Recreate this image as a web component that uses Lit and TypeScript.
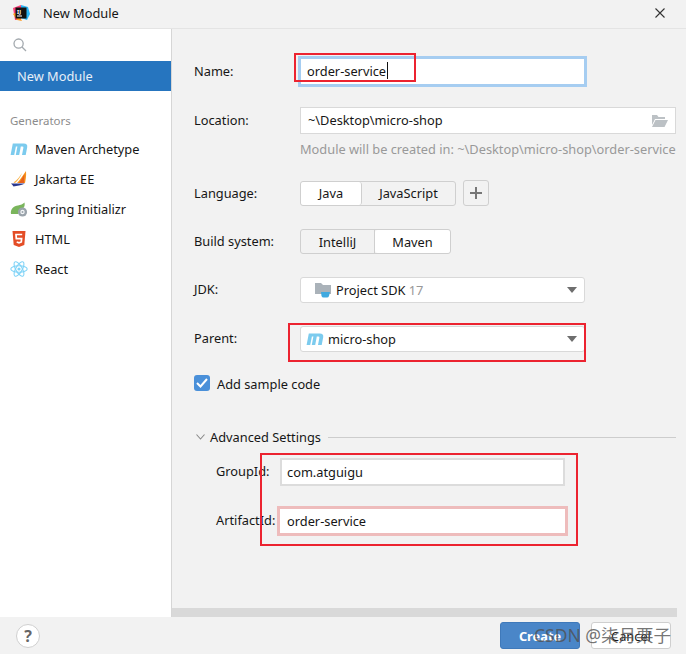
import { LitElement, html, css } from 'lit';
import { customElement } from 'lit/decorators.js';

const mavenIcon = html`<svg class="ic" width="18" height="14" viewBox="0 0 18 14">
  <path fill="#7ccbee" d="M0.6 13 L2.8 1.6 L13.8 1.6 Q17.8 1.6 17.2 5.2 L15.7 13 L12 13 L13.4 5.8 Q13.7 4.4 12.3 4.4 L10.8 4.4 L9.2 13 L5.8 13 L7.4 4.4 L5.9 4.4 L4.2 13Z"/>
</svg>`;

const jakartaIcon = html`<svg class="ic" width="18" height="18" viewBox="0 0 18 18">
  <path fill="#f7941d" d="M16 1 C16.5 6 15.5 10 15 13 L7 13 C10 10 13 5 16 1Z"/>
  <path fill="#fbb040" d="M12 3 C10.5 7 8 10.5 5 13 L3.5 12.5 C7 10 10 6.5 12 3Z"/>
  <path fill="#e8601c" d="M9 13 C11 10 13 7 14.5 4 L14 13Z"/>
  <path fill="#2b3990" d="M1 13.5 L15 13.5 C11 15.5 7 16 3.5 16.5 C3 15.5 2 14.5 1 13.5Z"/>
</svg>`;

const springIcon = html`<svg class="ic" width="18" height="18" viewBox="0 0 18 18">
  <path fill="#7ab55c" d="M1 14 C0 9 4 6 8 5.5 C10.5 5 13 4 14.5 2.5 C15 5 14.5 7 13 8.5 L8 14Z"/>
  <circle cx="12.5" cy="12" r="4.6" fill="#9aa3ab"/>
  <circle cx="12.5" cy="12" r="2.2" fill="#f4f6f7"/>
  <circle cx="12.5" cy="12" r="1" fill="#9aa3ab"/>
</svg>`;

const htmlIcon = html`<svg class="ic" width="18" height="18" viewBox="0 0 18 18">
  <path fill="#e44d26" d="M2.5 1 L15.5 1 L14.3 15 L9 17 L3.7 15Z"/>
  <path fill="none" stroke="#fff" stroke-width="1.7" d="M12.2 4.5 L6 4.5 L6.3 8.6 L11.6 8.6 L11.3 12 L9 12.8 L6.7 12"/>
</svg>`;

const reactIcon = html`<svg class="ic" width="18" height="18" viewBox="0 0 18 18">
  <g fill="none" stroke="#7fd3f7" stroke-width="1.1">
    <ellipse cx="9" cy="9" rx="8.2" ry="3.2"/>
    <ellipse cx="9" cy="9" rx="8.2" ry="3.2" transform="rotate(60 9 9)"/>
    <ellipse cx="9" cy="9" rx="8.2" ry="3.2" transform="rotate(120 9 9)"/>
  </g>
  <circle cx="9" cy="9" r="1.6" fill="#7fd3f7"/>
</svg>`;

const caret = html`<svg class="caret" width="10" height="6" viewBox="0 0 10 6"><path fill="#6e6e6e" d="M0 0 L10 0 L5 6Z"/></svg>`;

@customElement('app-root')
export class AppRoot extends LitElement {
  static styles = css`
    :host {
      display: block;
      width: 686px;
      height: 654px;
      overflow: hidden;
      position: relative;
      background: #f2f2f2;
      color: #161616;
      font-family: "Noto Sans", "Noto Sans CJK SC", sans-serif;
      font-size: 12.8px;
    }
    .titlebar {
      height: 28px;
      box-sizing: content-box;
      display: flex;
      align-items: center;
      padding: 0 21px 0 12px;
      border-bottom: 1px solid #e4e4e4;
    }
    .titlebar > * { margin-bottom: 2px; }
    .logo { margin-right: 13px; }
    .title { flex: 1; }
    .body { display: flex; height: 588px; }
    .side {
      width: 171px;
      background: #fff;
      border-right: 1px solid #d6d6d6;
      flex: none;
    }
    .search { height: 32px; display: flex; align-items: center; padding-left: 13px; }
    .selected {
      height: 30px;
      background: #2675bf;
      color: #e6eff8;
      display: flex;
      align-items: center;
      padding-left: 17px;
    }
    .gen-title { color: #8c8c8c; font-size: 11.5px; margin: 21px 0 4px 10px; line-height: 18px; }
    .gen {
      height: 30px;
      display: flex;
      align-items: center;
      gap: 7px;
      padding-left: 10px;
    }
    .ic { flex: none; }
    .main { flex: 1; display: flex; flex-direction: column; min-width: 0; }
    .form { flex: 1; padding: 30px 10px 0 22px; }
    .row { display: flex; align-items: center; }
    .lbl { width: 106px; flex: none; padding-bottom: 2px; box-sizing: border-box; }
    .field {
      background: #fff;
      border: 1px solid #d9d9d9;
      box-sizing: border-box;
      display: flex;
      align-items: center;
      padding: 0 7px;
    }
    .name-field {
      width: 283px;
      height: 25px;
      margin-left: 1px;
      border: none;
      padding: 0 6px 2px;
      box-shadow: 0 0 0 3px #a6cdf1;
    }
    .cursor { width: 1px; height: 17px; background: #111; margin-left: 1px; }
    .loc-row { margin-top: 23px; }
    .loc-field { width: 376px; height: 27px; justify-content: space-between; padding: 0 7px 2px; }
    .loc-field svg { margin-top: 2px; }
    .hint { color: #999; margin: 6px 0 0 106px; line-height: 19px; white-space: nowrap; }
    .lang-row { margin-top: 21px; }
    .lang-row .lbl { padding-bottom: 0; }
    .seg {
      display: flex;
      height: 25px;
      box-sizing: border-box;
      border: 1px solid #cfcfcf;
      border-radius: 3px;
      background: #f2f2f2;
    }
    .seg span { display: flex; align-items: center; justify-content: center; }
    .seg .on { background: #fff; border-radius: 3px; }
    .lang-seg { width: 156px; }
    .lang-seg .java { width: 60px; border-right: 1px solid #cfcfcf; }
    .lang-seg .js { flex: 1; }
    .plus {
      width: 26px;
      height: 26px;
      box-sizing: border-box;
      margin-left: 7px;
      border: 1px solid #cfcfcf;
      border-radius: 3px;
      display: flex;
      align-items: center;
      justify-content: center;
    }
    .build-row { margin-top: 23px; }
    .build-seg { width: 151px; }
    .build-seg .ij { width: 73px; border-right: 1px solid #cfcfcf; }
    .build-seg .mvn { flex: 1; }
    .combo {
      width: 285px;
      height: 26px;
      box-sizing: border-box;
      background: #fff;
      border: 1px solid #d9d9d9;
      border-radius: 3px;
      display: flex;
      align-items: center;
      padding: 0 7px 0 14px;
      gap: 4px;
    }
    .jdk-row { margin-top: 23px; }
    .parent-row { margin-top: 23px; }
    .parent-row .combo { padding-left: 5px; }
    .muted { color: #999; }
    .caret { margin-left: auto; }
    .check { margin-top: 23px; display: flex; align-items: center; gap: 7px; height: 16px; }
    .check .txt { padding-top: 2px; }
    .box {
      width: 16px;
      height: 16px;
      border-radius: 3px;
      background: #4a90d9;
      display: flex;
      align-items: center;
      justify-content: center;
    }
    .adv { margin-top: 37px; display: flex; align-items: center; gap: 5px; padding-left: 2px; height: 18px; }
    .adv .rule { flex: 1; height: 1px; background: #cdcdcd; margin-left: 2px; }
    .adv-rows { padding-left: 22px; }
    .adv .label { white-space: nowrap; }
    .adv-rows .lbl { width: 64px; }
    .group-row { margin-top: 12px; }
    .group-field { width: 285px; height: 28px; border-width: 2px; border-color: #dcdcdc; padding: 0 5px; }
    .artifact-row { margin-top: 23px; }
    .artifact-field {
      width: 285px;
      height: 24px;
      border: none;
      box-shadow: 0 0 0 3px #eebcbc;
      padding-left: 7px;
    }
    .hscroll { height: 9px; background: #d9d9d9; margin-right: 9px; }
    .footer {
      height: 37px;
      display: flex;
      align-items: center;
      padding: 0 15px 0 16px;
    }
    .help {
      width: 24px;
      height: 24px;
      border-radius: 50%;
      background: #fff;
      border: 1px solid #d0d0d0;
      box-sizing: border-box;
      color: #666;
      font-weight: 700;
      font-size: 16px;
      display: flex;
      align-items: center;
      justify-content: center;
    }
    .btn {
      width: 80px;
      height: 27px;
      box-sizing: border-box;
      border-radius: 3px;
      display: flex;
      align-items: center;
      justify-content: center;
    }
    .create { margin-left: auto; background: #4a86c8; border: 1px solid #3f79ba; color: #fff; font-weight: 700; }
    .cancel { margin-left: 11px; background: #fff; border: 1px solid #cfcfcf; }
    .mark { position: absolute; border: 2px solid #ec2330; box-sizing: border-box; pointer-events: none; }
    .mark-name { left: 294px; top: 53px; width: 122px; height: 29px; }
    .mark-parent { left: 288px; top: 323px; width: 298px; height: 39px; }
    .mark-group { left: 260px; top: 453px; width: 318px; height: 93px; }
    .watermark {
      position: absolute;
      left: 534px;
      top: 623px;
      font-size: 17.5px;
      line-height: 24px;
      color: rgba(80, 80, 80, 0.8);
      white-space: nowrap;
    }
  `;

  render() {
    return html`
      <div class="titlebar">
        <svg class="logo" width="18" height="18" viewBox="0 0 18 18">
          <path fill="#fc3f77" d="M1 4 L9 1 L9 16 L3 16Z"/>
          <path fill="#ff9a1f" d="M1 10 L5 16 L10 17 L5 8Z"/>
          <path fill="#29b6f6" d="M9 1 L16 3 L18 10 L15 16 L9 14Z"/>
          <rect x="3.5" y="3.5" width="11" height="11" fill="#111"/>
          <text x="5" y="9.5" font-size="5.5" font-weight="700" fill="#fff">IJ</text>
          <rect x="5" y="11.5" width="5" height="1" fill="#fff"/>
        </svg>
        <span class="title">New Module</span>
        <svg width="10" height="10" viewBox="0 0 10 10"><path stroke="#333" stroke-width="1.1" d="M0.5 0.5 L9.5 9.5 M9.5 0.5 L0.5 9.5"/></svg>
      </div>
      <div class="body">
        <div class="side">
          <div class="search">
            <svg width="14" height="14" viewBox="0 0 14 14" fill="none" stroke="#a3a9ae" stroke-width="1.3"><circle cx="5.6" cy="5.6" r="4.6"/><path d="M9 9 L13 13"/></svg>
          </div>
          <div class="selected">New Module</div>
          <div class="gen-title">Generators</div>
          <div class="gen">${mavenIcon}Maven Archetype</div>
          <div class="gen">${jakartaIcon}Jakarta EE</div>
          <div class="gen">${springIcon}Spring Initializr</div>
          <div class="gen">${htmlIcon}HTML</div>
          <div class="gen">${reactIcon}React</div>
        </div>
        <div class="main">
          <div class="form">
            <div class="row">
              <span class="lbl">Name:</span>
              <div class="field name-field">order-service<span class="cursor"></span></div>
            </div>
            <div class="row loc-row">
              <span class="lbl">Location:</span>
              <div class="field loc-field">~\\Desktop\\micro-shop
                <svg width="17" height="13" viewBox="0 0 17 13"><path fill="#bcc1c5" d="M1 1 L6 1 L7.5 3 L14 3 L14 5 L4 5 L1 11Z M4.5 6 L17 6 L13.5 13 L1 13Z"/></svg>
              </div>
            </div>
            <div class="hint">Module will be created in: ~\\Desktop\\micro-shop\\order-service</div>
            <div class="row lang-row">
              <span class="lbl">Language:</span>
              <div class="seg lang-seg"><span class="java on">Java</span><span class="js">JavaScript</span></div>
              <div class="plus"><svg width="12" height="12" viewBox="0 0 12 12"><path stroke="#777" stroke-width="2" d="M6 0 V12 M0 6 H12"/></svg></div>
            </div>
            <div class="row build-row">
              <span class="lbl">Build system:</span>
              <div class="seg build-seg"><span class="ij">IntelliJ</span><span class="mvn on">Maven</span></div>
            </div>
            <div class="row jdk-row">
              <span class="lbl">JDK:</span>
              <div class="combo">
                <svg class="ic" width="17" height="16" viewBox="0 0 17 16">
                  <path fill="#aab2b9" d="M0 1 L6 1 L8 3 L16 3 L16 12 L0 12Z"/>
                  <path fill="#3fa9e0" d="M6 10 L15 10 L14 14 Q13.5 15.5 12 15.5 L8.5 15.5 Q7 15.5 6.5 14Z"/>
                </svg>
                <span>Project SDK <span class="muted">17</span></span>
                ${caret}
              </div>
            </div>
            <div class="row parent-row">
              <span class="lbl">Parent:</span>
              <div class="combo">${mavenIcon}<span>micro-shop</span>${caret}</div>
            </div>
            <div class="check">
              <span class="box"><svg width="12" height="10" viewBox="0 0 12 10"><path fill="none" stroke="#fff" stroke-width="2" d="M1 5 L4.5 8.5 L11 1"/></svg></span>
              <span class="txt">Add sample code</span>
            </div>
            <div class="adv">
              <svg width="9" height="6" viewBox="0 0 9 6"><path fill="none" stroke="#8a8a8a" stroke-width="1.1" d="M0.5 0.5 L4.5 5 L8.5 0.5"/></svg>
              <span class="label">Advanced Settings</span>
              <span class="rule"></span>
            </div>
            <div class="adv-rows">
              <div class="row group-row">
                <span class="lbl">GroupId:</span>
                <div class="field group-field">com.atguigu</div>
              </div>
              <div class="row artifact-row">
                <span class="lbl">ArtifactId:</span>
                <div class="field artifact-field">order-service</div>
              </div>
            </div>
          </div>
          <div class="hscroll"></div>
        </div>
      </div>
      <div class="footer">
        <div class="help">?</div>
        <div class="btn create">Create</div>
        <div class="btn cancel">Cancel</div>
      </div>
      <div class="mark mark-name"></div>
      <div class="mark mark-parent"></div>
      <div class="mark mark-group"></div>
      <div class="watermark">CSDN @柒月栗子</div>
    `;
  }
}
